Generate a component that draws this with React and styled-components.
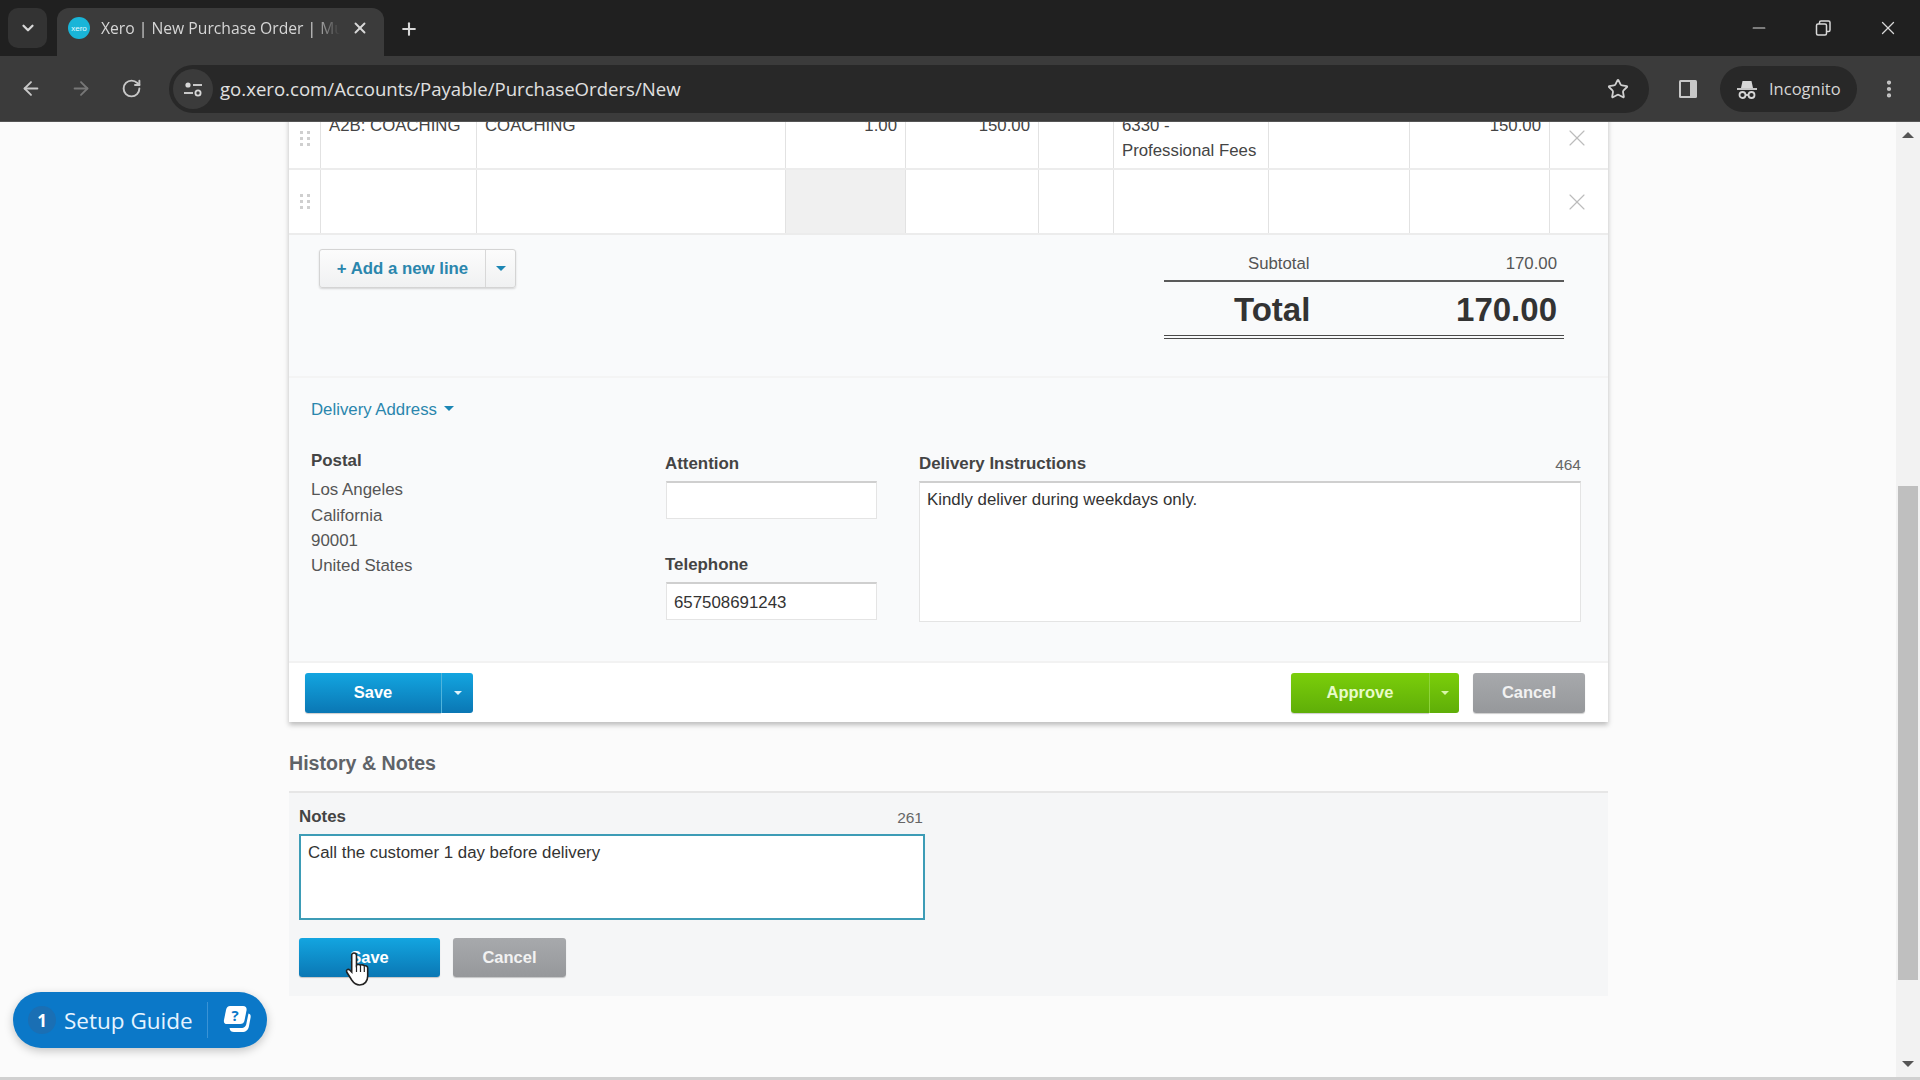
import React from "react";
import styled, { createGlobalStyle } from "styled-components";
import { ArrowLeft, ArrowRight, RotateCw, Star, Plus, X, ChevronDown, Minus, EllipsisVertical } from "lucide-react";

const GlobalStyle = createGlobalStyle`
  html, body {
    margin: 0;
    height: 100%;
    overflow: hidden;
    background: #fbfbfb;
  }
  * {
    box-sizing: border-box;
  }
`;

const Screen = styled.div`
  width: 1920px;
  height: 1080px;
  display: flex;
  flex-direction: column;
  overflow: hidden;
  font-family: "Liberation Sans", Arial, sans-serif;
  color: #333;
`;

/* browser chrome */
const TabStrip = styled.div`
  height: 56px;
  flex: none;
  background: #202020;
  display: flex;
  align-items: flex-end;
  padding-left: 8px;
  color: #d8d8d8;
`;

const TabSearch = styled.div`
  width: 39px;
  height: 40px;
  margin-bottom: 8px;
  margin-right: 10px;
  background: #333;
  border-radius: 10px;
  display: flex;
  align-items: center;
  justify-content: center;
`;

const Tab = styled.div`
  width: 327px;
  height: 48px;
  background: #3b3b3b;
  border-radius: 12px 12px 0 0;
  display: flex;
  align-items: center;
  padding: 0 15px 8px 11px;
  gap: 11px;
`;

const Favicon = styled.div`
  width: 22px;
  height: 22px;
  flex: none;
  border-radius: 50%;
  background: #19b5d8;
  color: #e8fbff;
  font-size: 8px;
  display: flex;
  align-items: center;
  justify-content: center;
`;

const TabTitle = styled.div`
  flex: 1;
  font-family: "Open Sans", sans-serif;
  font-size: 15.7px;
  color: #d6d6d6;
  white-space: nowrap;
  overflow: hidden;
  -webkit-mask-image: linear-gradient(to right, #000 88%, transparent);
  mask-image: linear-gradient(to right, #000 88%, transparent);
`;

const NewTab = styled.div`
  margin: 0 0 17px 15px;
  display: flex;
`;

const WindowControls = styled.div`
  margin-left: auto;
  align-self: flex-start;
  display: flex;
  align-items: center;
  height: 56px;
  padding-right: 21px;
  gap: 44px;
`;

const Toolbar = styled.div`
  height: 66px;
  flex: none;
  background: #3b3b3b;
  display: flex;
  align-items: center;
  padding: 0 20px 0 20px;
  color: #c8c8c8;
  border-bottom: 1px solid #555;
`;

const NavButton = styled.div`
  width: 22px;
  display: flex;
  justify-content: center;
  margin-right: ${(p) => p.$gap}px;
  color: ${(p) => (p.$dim ? "#777" : "#c8c8c8")};
`;

const AddressBar = styled.div`
  width: 1480px;
  height: 48px;
  background: #282828;
  border-radius: 24px;
  display: flex;
  align-items: center;
  padding: 0 20px 0 4px;
`;

const SiteInfo = styled.div`
  width: 40px;
  height: 40px;
  border-radius: 50%;
  background: #3b3b3b;
  display: flex;
  align-items: center;
  justify-content: center;
  margin-right: 7px;
`;

const Url = styled.div`
  flex: 1;
  font-family: "Open Sans", sans-serif;
  font-size: 18.6px;
  color: #e0e0e0;
`;

const SidePanel = styled.div`
  margin: 0 21px 0 28px;
  display: flex;
`;

const IncognitoPill = styled.div`
  width: 137px;
  height: 46px;
  border-radius: 23px;
  background: #282828;
  display: flex;
  align-items: center;
  padding-left: 16px;
  gap: 11px;
  font-family: "Open Sans", sans-serif;
  font-size: 16.5px;
  color: #d6d6d6;
`;

const MenuButton = styled.div`
  margin-left: 21px;
  display: flex;
`;

/* page */
const Viewport = styled.div`
  flex: 1;
  min-height: 0;
  display: flex;
  overflow: hidden;
  position: relative;
`;

const Page = styled.div`
  flex: 1;
  padding: 0 0 0 289px;
  overflow: hidden;
  background: #fbfbfb;
`;

const Column = styled.div`
  width: 1319px;
  margin-top: -14px;
`;

const Card = styled.div`
  background: #f9fafb;
  box-shadow: 0 3px 5px rgba(0, 0, 0, 0.25);
`;

const GridRow = styled.div`
  display: grid;
  grid-template-columns: 32px 156px 309px 120px 133px 75px 155px 141px 140px 58px;
  height: ${(p) => p.$height}px;
  background: #fff;
  border-bottom: 2px solid #ececec;
`;

const Cell = styled.div`
  border-right: 1px solid #e2e2e2;
  padding: 5px 8px 0;
  font-size: 16.8px;
  line-height: 25px;
  color: #444;
  text-align: ${(p) => (p.$right ? "right" : "left")};
  background: ${(p) => (p.$shade ? "#f0f0f0" : "transparent")};
`;

const GripCell = styled.div`
  display: flex;
  align-items: center;
  justify-content: center;
  padding-left: 1px;
  border-right: 1px solid #e2e2e2;
`;

const RemoveCell = styled.div`
  display: flex;
  align-items: center;
  justify-content: center;
  padding-right: 4px;
  color: #bcbcbc;
`;

const Grip = styled.div`
  display: grid;
  grid-template-columns: 3px 3px;
  gap: 3px 4px;
  span {
    width: 3px;
    height: 3px;
    background: #cfcfcf;
  }
`;

const SummaryRow = styled.div`
  display: flex;
  justify-content: space-between;
  padding: 13px 31px 0 30px;
  height: 143px;
  border-bottom: 2px solid #f4f4f4;
`;

const AddLine = styled.div`
  display: flex;
  height: 39px;
  width: 197px;
  margin-top: 1px;
  border-radius: 3px;
  overflow: hidden;
  border: 1px solid #d4d4d4;
  box-shadow: 0 1px 2px rgba(0, 0, 0, 0.15);
  background: linear-gradient(#fcfcfc, #f0f1f2);
  color: #2a86ad;
  font-size: 16.8px;
  font-weight: bold;
`;

const AddLabel = styled.div`
  width: 166px;
  display: flex;
  align-items: center;
  justify-content: center;
  border-right: 1px solid #d8d8d8;
`;

const AddCaret = styled.div`
  flex: 1;
  display: flex;
  align-items: center;
  justify-content: center;
`;

const Caret = styled.i`
  display: block;
  width: 0;
  height: 0;
  border-left: ${(p) => p.$size || 5}px solid transparent;
  border-right: ${(p) => p.$size || 5}px solid transparent;
  border-top: ${(p) => p.$size || 5}px solid ${(p) => p.$color};
`;

const Totals = styled.div`
  width: 400px;
  margin-right: 13px;
`;

const SubtotalRow = styled.div`
  display: flex;
  justify-content: space-between;
  height: 34px;
  padding: 6px 7px 0 84px;
  border-bottom: 2px solid #5a5a5a;
  font-size: 16.8px;
  color: #555;
`;

const TotalRow = styled.div`
  display: flex;
  justify-content: space-between;
  height: 57px;
  padding: 9px 7px 0 70px;
  border-bottom: 4px double #4a4a4a;
  font-size: 33px;
  font-weight: bold;
  color: #333;
`;

const DeliverySection = styled.div`
  padding: 20px 27px 0 22px;
  height: 283px;
`;

const DeliveryToggle = styled.div`
  display: flex;
  align-items: center;
  gap: 7px;
  color: #2a86ad;
  font-size: 16.8px;
  line-height: 24px;
`;

const ToggleCaret = styled(Caret)`
  margin-bottom: 4px;
`;

const DeliveryGrid = styled.div`
  display: grid;
  grid-template-columns: 312px 212px 1fr;
  column-gap: 42px;
  margin-top: 26px;
`;

const Postal = styled.div`
  font-size: 16.9px;
  line-height: 25.3px;
  color: #555;
  strong {
    display: block;
    font-size: 16.9px;
    color: #444;
    margin-bottom: 4px;
  }
`;

const FieldStack = styled.div`
  display: flex;
  flex-direction: column;
  gap: 37px;
  padding-top: 7px;
`;

const InstructionsColumn = styled.div`
  padding-top: 7px;
`;

const Label = styled.div`
  display: flex;
  justify-content: space-between;
  align-items: flex-end;
  height: 19px;
  font-size: 16.9px;
  font-weight: bold;
  color: #444;
  margin-bottom: ${(p) => p.$gap || 7}px;
`;

const Count = styled.span`
  font-size: 15.5px;
  font-weight: normal;
  color: #666;
  margin-right: ${(p) => p.$inset || 0}px;
`;

const TextBox = styled.div`
  height: ${(p) => p.$height}px;
  margin-left: ${(p) => p.$inset || 0}px;
  background: #fff;
  border: 1px solid #e4e4e4;
  border-top: 2px solid #cfcfcf;
  padding: ${(p) => p.$pad || 7}px 7px;
  font-size: 16.85px;
  line-height: 20px;
  color: #333;
`;

const CardFooter = styled.div`
  height: 61px;
  background: #fff;
  border-top: 2px solid #f2f2f2;
  display: flex;
  align-items: center;
  justify-content: space-between;
  padding: 0 23px 0 16px;
`;

const FooterGroup = styled.div`
  display: flex;
  gap: 14px;
`;

const tones = {
  blue: { bg: "linear-gradient(#13a5e0, #0a77b4)", line: "#4fb4dc", text: "#fff" },
  green: { bg: "linear-gradient(#7bce0a, #5fae08)", line: "#8ed43a", text: "#e8fbc8" },
  gray: { bg: "linear-gradient(#a7a9ac, #96989b)", line: "#aaa", text: "#f2f2f2" },
};

const ActionButton = styled.div`
  display: flex;
  align-items: center;
  justify-content: center;
  width: ${(p) => p.$width}px;
  height: ${(p) => p.$height || 40}px;
  border-radius: ${(p) => (p.$joined ? "3px 0 0 3px" : "3px")};
  background: ${(p) => tones[p.$tone].bg};
  color: ${(p) => tones[p.$tone].text};
  font-size: 16.5px;
  font-weight: bold;
  box-shadow: 0 1px 1px rgba(0, 0, 0, 0.2);
`;

const CaretButton = styled.div`
  display: flex;
  align-items: center;
  justify-content: center;
  width: ${(p) => p.$width}px;
  height: 40px;
  border-radius: 0 3px 3px 0;
  background: ${(p) => tones[p.$tone].bg};
  border-left: 1px solid ${(p) => tones[p.$tone].line};
`;

const Split = styled.div`
  display: flex;
`;

const HistoryTitle = styled.div`
  margin-top: 29px;
  height: 40px;
  font-size: 19.6px;
  font-weight: bold;
  line-height: 24px;
  color: #5f6368;
  border-bottom: 2px solid #e6e6e6;
  box-sizing: content-box;
`;

const HistoryPanel = styled.div`
  background: #f5f6f7;
  height: 203px;
  padding: 15px 10px 0;
`;

const NotesBlock = styled.div`
  width: 626px;
`;

const NotesBox = styled.div`
  height: 86px;
  background: #fff;
  border: 2px solid #3d9cb6;
  padding: 6px 7px;
  font-size: 16.85px;
  line-height: 22px;
  color: #333;
`;

const NotesActions = styled.div`
  display: flex;
  gap: 13px;
  margin-top: 18px;
`;

const Cursor = styled.svg`
  position: absolute;
  left: 344px;
  top: 828px;
`;

/* scrollbar */
const ScrollTrack = styled.div`
  width: 24px;
  flex: none;
  background: #f2f2f2;
  display: flex;
  flex-direction: column;
  align-items: center;
  padding: 10px 0 0;
`;

const ScrollArrow = styled.i`
  display: block;
  width: 0;
  height: 0;
  border-left: 6px solid transparent;
  border-right: 6px solid transparent;
  ${(p) => (p.$down ? "border-top: 6px solid #555;" : "border-bottom: 6px solid #555;")}
`;

const ScrollThumb = styled.div`
  width: 20px;
  height: 494px;
  margin: 348px 0 81px;
  background: #bfbfbf;
`;

const BottomEdge = styled.div`
  position: absolute;
  left: 0;
  right: 0;
  bottom: 0;
  height: 3px;
  background: #d0d0d0;
`;

/* floating help button */
const SetupGuide = styled.div`
  position: absolute;
  left: 13px;
  top: 870px;
  width: 254px;
  height: 56px;
  border-radius: 28px;
  background: #0b78c8;
  box-shadow: 0 3px 10px rgba(0, 0, 0, 0.22);
  display: flex;
  align-items: center;
  padding-left: 15px;
  color: #e6f4ff;
  font-family: "Open Sans", sans-serif;
  font-size: 22.5px;
`;

const GuideBadge = styled.div`
  width: 28px;
  height: 28px;
  border-radius: 50%;
  background: #1a6fb4;
  color: #fff;
  font-size: 17px;
  font-weight: 700;
  display: flex;
  align-items: center;
  justify-content: center;
  margin-right: 8px;
`;

const GuideDivider = styled.div`
  width: 1px;
  height: 36px;
  background: #3a93d6;
  margin: 0 15px 0 14px;
`;

const GripIcon = () => (
  <Grip>
    {[0, 1, 2, 3, 4, 5].map((i) => (
      <span key={i} />
    ))}
  </Grip>
);

const TableRow = ({ height, cells }) => (
  <GridRow $height={height}>
    <GripCell>
      <GripIcon />
    </GripCell>
    {cells.map((c, i) => (
      <Cell key={i} $right={c.right} $shade={c.shade}>
        {c.text}
      </Cell>
    ))}
    <RemoveCell>
      <X size={28} strokeWidth={1} />
    </RemoveCell>
  </GridRow>
);

export default function App() {
  return (
    <Screen>
      <GlobalStyle />
      <TabStrip>
        <TabSearch>
          <ChevronDown size={18} strokeWidth={3} />
        </TabSearch>
        <Tab>
          <Favicon>xero</Favicon>
          <TabTitle>Xero | New Purchase Order | Mu</TabTitle>
          <X size={18} strokeWidth={2.5} />
        </Tab>
        <NewTab>
          <Plus size={20} strokeWidth={2.5} />
        </NewTab>
        <WindowControls>
          <Minus size={20} strokeWidth={1.4} />
          <svg width="20" height="20" viewBox="0 0 20 20" fill="none" stroke="currentColor" strokeWidth="1.5">
            <rect x="3.5" y="6" width="10" height="11" rx="1.5" />
            <path d="M6.5 6V4.5A1.5 1.5 0 0 1 8 3h7.5A1.5 1.5 0 0 1 17 4.5V12a1.5 1.5 0 0 1-1.5 1.5h-2" />
          </svg>
          <X size={22} strokeWidth={1.4} />
        </WindowControls>
      </TabStrip>
      <Toolbar>
        <NavButton $gap={28}>
          <ArrowLeft size={23} strokeWidth={2} />
        </NavButton>
        <NavButton $gap={28} $dim>
          <ArrowRight size={23} strokeWidth={2} />
        </NavButton>
        <NavButton $gap={27}>
          <RotateCw size={21} strokeWidth={2.2} />
        </NavButton>
        <AddressBar>
          <SiteInfo>
            <svg width="20" height="20" viewBox="0 0 20 20" fill="none" stroke="#d8d8d8" strokeWidth="1.8">
              <circle cx="5" cy="6" r="2.6" fill="#d8d8d8" stroke="none" />
              <path d="M10 6h9" />
              <path d="M1 14h9" />
              <circle cx="15" cy="14" r="2.6" />
            </svg>
          </SiteInfo>
          <Url>go.xero.com/Accounts/Payable/PurchaseOrders/New</Url>
          <Star size={22} strokeWidth={2} color="#d0d0d0" />
        </AddressBar>
        <SidePanel>
          <svg width="22" height="22" viewBox="0 0 22 22">
            <rect x="2" y="2" width="18" height="18" rx="1.5" fill="#c8c8c8" />
            <rect x="4" y="4" width="9" height="14" fill="#3b3b3b" />
          </svg>
        </SidePanel>
        <IncognitoPill>
          <svg width="22" height="22" viewBox="0 0 22 22" fill="none" stroke="#d6d6d6" strokeWidth="1.8">
            <path d="M1 11h20" />
            <path d="M5 10l1.5-7h9L17 10" fill="#d6d6d6" stroke="none" />
            <circle cx="6.5" cy="17" r="3" />
            <circle cx="15.5" cy="17" r="3" />
            <path d="M9.5 17h3" />
          </svg>
          Incognito
        </IncognitoPill>
        <MenuButton>
          <EllipsisVertical size={22} strokeWidth={2.6} />
        </MenuButton>
      </Toolbar>
      <Viewport>
        <Page>
          <Column>
            <Card>
              <TableRow
                height={62}
                cells={[
                  { text: "A2B: COACHING" },
                  { text: "COACHING" },
                  { text: "1.00", right: true },
                  { text: "150.00", right: true },
                  { text: "" },
                  {
                    text: (
                      <>
                        6330 -
                        <br />
                        Professional Fees
                      </>
                    ),
                  },
                  { text: "" },
                  { text: "150.00", right: true },
                ]}
              />
              <TableRow
                height={65}
                cells={[
                  { text: "" },
                  { text: "" },
                  { text: "", shade: true },
                  { text: "" },
                  { text: "" },
                  { text: "" },
                  { text: "" },
                  { text: "" },
                ]}
              />
              <SummaryRow>
                <AddLine>
                  <AddLabel>+ Add a new line</AddLabel>
                  <AddCaret>
                    <Caret $color="#1c86b4" />
                  </AddCaret>
                </AddLine>
                <Totals>
                  <SubtotalRow>
                    <span>Subtotal</span>
                    <span>170.00</span>
                  </SubtotalRow>
                  <TotalRow>
                    <span>Total</span>
                    <span>170.00</span>
                  </TotalRow>
                </Totals>
              </SummaryRow>
              <DeliverySection>
                <DeliveryToggle>
                  Delivery Address
                  <ToggleCaret $color="#1c86b4" />
                </DeliveryToggle>
                <DeliveryGrid>
                  <Postal>
                    <strong>Postal</strong>
                    Los Angeles
                    <br />
                    California
                    <br />
                    90001
                    <br />
                    United States
                  </Postal>
                  <FieldStack>
                    <div>
                      <Label>Attention</Label>
                      <TextBox $height={38} $inset={1} />
                    </div>
                    <div>
                      <Label>Telephone</Label>
                      <TextBox $height={38} $inset={1} $pad={9}>657508691243</TextBox>
                    </div>
                  </FieldStack>
                  <InstructionsColumn>
                    <Label>
                      Delivery Instructions
                      <Count>464</Count>
                    </Label>
                    <TextBox $height={141}>Kindly deliver during weekdays only.</TextBox>
                  </InstructionsColumn>
                </DeliveryGrid>
              </DeliverySection>
              <CardFooter>
                <Split>
                  <ActionButton $tone="blue" $width={136} $joined>
                    Save
                  </ActionButton>
                  <CaretButton $tone="blue" $width={32}>
                    <Caret $color="#dff3fb" $size={4} />
                  </CaretButton>
                </Split>
                <FooterGroup>
                  <Split>
                    <ActionButton $tone="green" $width={138} $joined>
                      Approve
                    </ActionButton>
                    <CaretButton $tone="green" $width={30}>
                      <Caret $color="#d8f5a8" $size={4} />
                    </CaretButton>
                  </Split>
                  <ActionButton $tone="gray" $width={112}>
                    Cancel
                  </ActionButton>
                </FooterGroup>
              </CardFooter>
            </Card>
            <HistoryTitle>History &amp; Notes</HistoryTitle>
            <HistoryPanel>
              <NotesBlock>
                <Label>
                  Notes
                  <Count $inset={2}>261</Count>
                </Label>
                <NotesBox>Call the customer 1 day before delivery</NotesBox>
                <NotesActions>
                  <ActionButton $tone="blue" $width={141} $height={39}>
                    Save
                  </ActionButton>
                  <ActionButton $tone="gray" $width={113} $height={39}>
                    Cancel
                  </ActionButton>
                </NotesActions>
              </NotesBlock>
            </HistoryPanel>
          </Column>
        </Page>
        <ScrollTrack>
          <ScrollArrow />
          <ScrollThumb />
          <ScrollArrow $down />
        </ScrollTrack>
        <BottomEdge />
        <SetupGuide>
          <GuideBadge>1</GuideBadge>
          Setup Guide
          <GuideDivider />
          <svg width="30" height="30" viewBox="0 0 30 30">
            <path d="M25.5 8.5c2 .5 2.5 2 2 4.5l-1.5 8c-.8 4-3 6-7 6H11c-2.5 0-4-1-4.5-4H18c3.5 0 5-1.5 5.5-5z" fill="#fff" />
            <path d="M7 1h13c3 0 4 2 3.5 4.5l-2 10c-.5 2.5-2 3.5-4.5 3.5H4c-2.5 0-3.5-1.5-3-4l2-10C3.5 2.5 5 1 7 1z" fill="#fff" />
            <text x="12" y="16" fontSize="15" fontWeight="700" fontFamily="Open Sans" fill="#0b78c8" textAnchor="middle">?</text>
          </svg>
        </SetupGuide>
        <Cursor width="32" height="38" viewBox="0 0 32 38">
          <path
            d="M10 3c1.5 0 2.5 1 2.5 2.5V15c.6-.8 3.4-.8 4 .3.8-.8 3.3-.6 3.8.7 1-.6 3.4-.2 3.4 2v8c0 5-3 9-8 9-4 0-6-2-8-5l-5-8c-1-2 1.5-3.5 3-2l2 2V5.5C7.5 4 8.5 3 10 3z"
            fill="#fff"
            stroke="#222"
            strokeWidth="1.6"
          />
          <path d="M12.5 15v7M16.5 16v6M20.3 17v5" stroke="#222" strokeWidth="1.2" />
        </Cursor>
      </Viewport>
    </Screen>
  );
}
